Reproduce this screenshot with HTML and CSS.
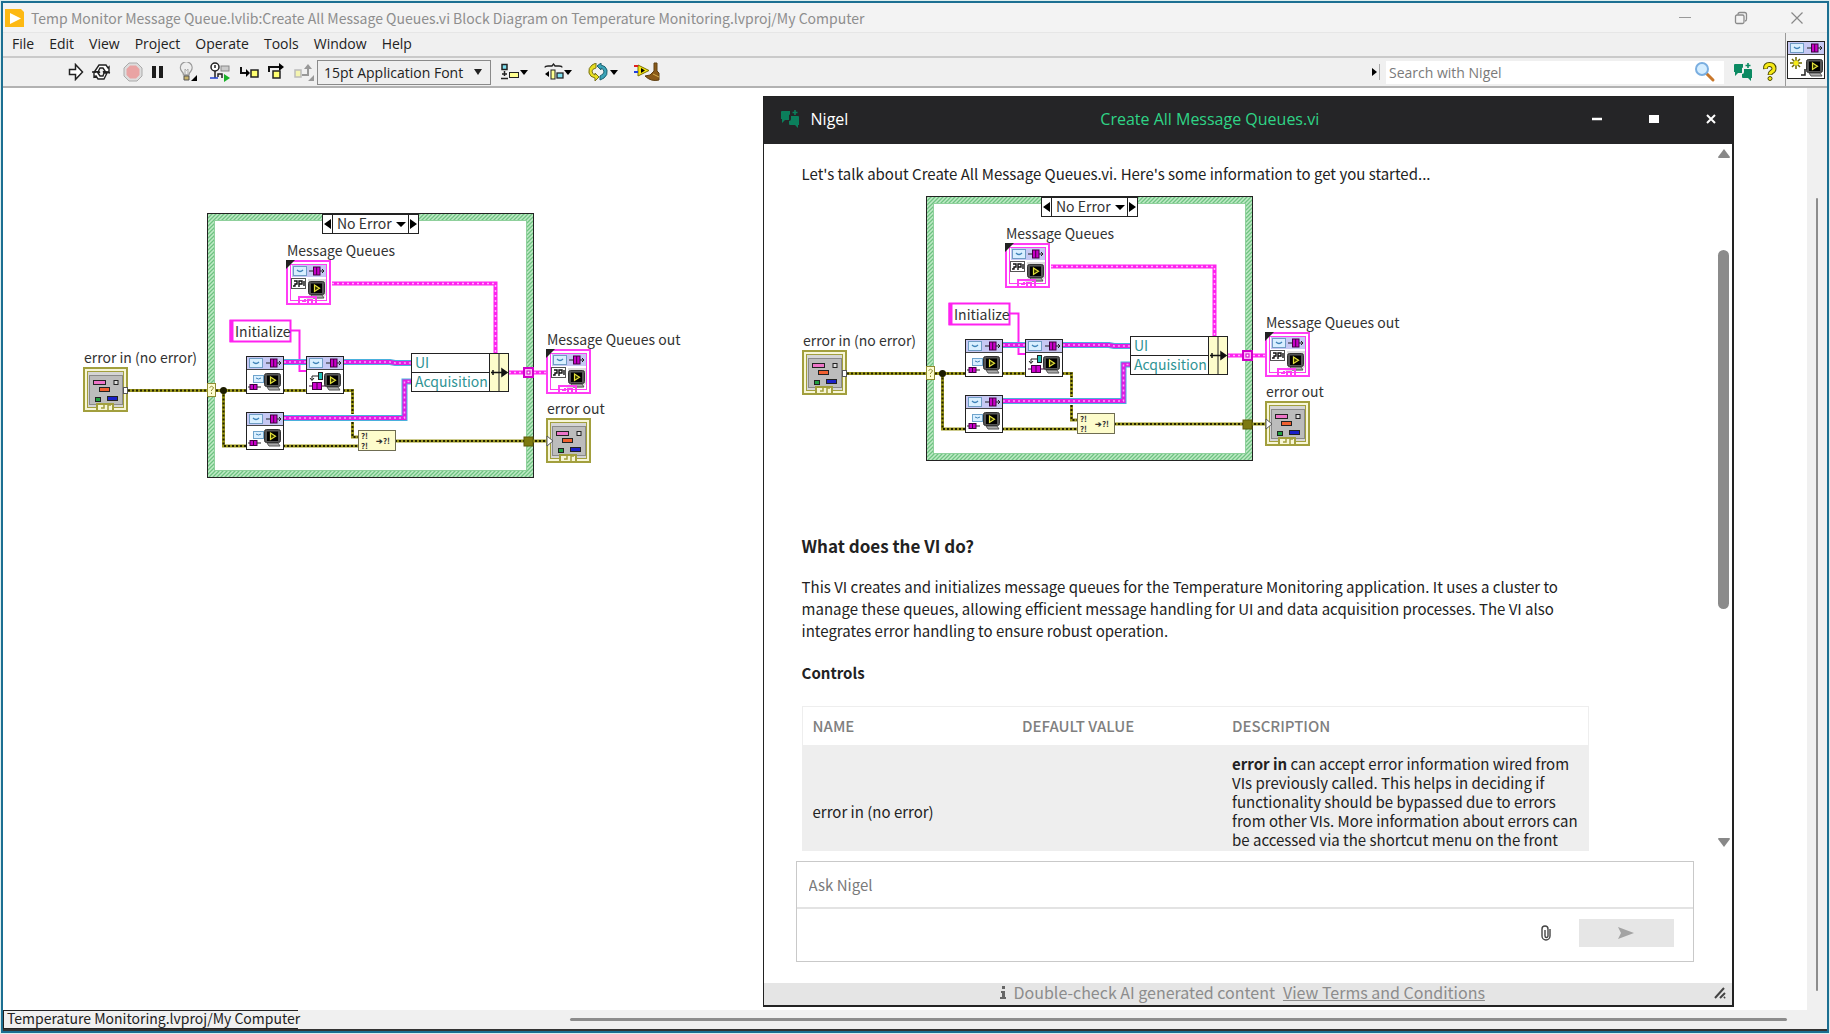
FILE: index.html
```html
<!DOCTYPE html>
<html lang="en">
<head>
<meta charset="utf-8">
<title>Create All Message Queues.vi Block Diagram</title>
<link rel="stylesheet" href="styles.css">
</head>
<body>
<svg class="defs" aria-hidden="true">
  <defs>
    <pattern id="hatch" width="4" height="4" patternUnits="userSpaceOnUse">
      <rect width="4" height="4" fill="#bfeac6"/>
      <path d="M-1 1L1 -1M0 4L4 0M3 5L5 3" stroke="#6fc482" stroke-width="1.3"/>
    </pattern>
    <g id="envelope">
      <rect x=".5" y=".5" width="13" height="9" fill="#d9efff" stroke="#6f9cc4"/>
      <path d="M4 4q3 3 6 0" fill="none" stroke="#3f83b8" stroke-width="1.3"/>
    </g>
    <g id="queue">
      <path d="M-2 5h15M11 3l2 2-2 2" stroke="#222" fill="none"/>
      <rect x="2.500" y="1" width="6.500" height="8" fill="#c800c8" stroke="#400040"/>
      <path d="M5.700 1v8" stroke="#400040"/>
    </g>
    <g id="monitor">
      <path d="M3 14h11l2 3H5z" fill="#aaa" stroke="#555"/>
      <rect x=".5" y=".5" width="16" height="13" rx="2" fill="#555" stroke="#333"/>
      <rect x="3" y="2.500" width="11" height="9.500" fill="#000"/>
      <path d="M6.500 4l5 3.200-5 3.200z" fill="#333300" stroke="#e3e13a" stroke-width="1.200"/>
    </g>
    <g id="vi-head">
      <rect x=".5" y=".5" width="37" height="37" fill="#fff" stroke="#222"/>
      <rect x="1" y="1" width="36" height="12" fill="#c6c8f3"/>
      <path d="M1 13.500h36" stroke="#444"/>
      <use href="#envelope" x="3" y="2"/>
      <use href="#queue" x="22" y="2"/>
    </g>
    <g id="sub-vi">
      <use href="#vi-head"/>
      <use href="#monitor" x="18" y="17"/>
      <rect x="7.500" y="19.500" width="10" height="7" fill="#d9efff" stroke="#6fa4cc"/>
      <path d="M10 22q2.500 2 5 0" stroke="#3f83b8" fill="none"/>
      <path d="M2 31h13" stroke="#222"/>
      <rect x="4" y="28.500" width="7" height="5" fill="#c800c8" stroke="#400040"/>
      <path d="M7.500 28v6" stroke="#400040"/>
    </g>
    <g id="cluster-icon">
      <rect x="1" y="1" width="43" height="43" fill="#fff" stroke="#ff3df4" stroke-width="2"/>
      <rect x="4.500" y="4.500" width="36" height="36" fill="#fff" stroke="#ff3df4"/>
      <rect x="6" y="5" width="34" height="12" fill="#c6c8f3"/>
      <use href="#envelope" x="7" y="6"/>
      <use href="#queue" x="25" y="6"/>
      <path d="M22 19h18v16l-4 4H20l3-4" fill="#ddd"/>
      <use href="#monitor" x="22" y="21"/>
      <rect x="5.500" y="18.500" width="14" height="10" fill="#fff" stroke="#555"/>
      <path d="M7 26h2v-2h2v-3H8M13 27v-6h3v3h-3M18 21v5" fill="none" stroke="#111" stroke-width="1.400"/>
      <path d="M13 44v-7h17v7M16 41h3v-2M22 43v-3h4v3" fill="none" stroke="#ff3df4" stroke-width="2"/>
      <path d="M0 0h9L0 9z" fill="#222"/>
    </g>
    <g id="error-icon">
      <rect x="1" y="1" width="43" height="43" fill="#f7f6d8" stroke="#a29f3d" stroke-width="2"/>
      <rect x="4.500" y="4.500" width="36" height="36" fill="#d5d5d5" stroke="#a29f3d"/>
      <rect x="6.500" y="8.500" width="33" height="29" fill="#bcbcbc" stroke="#8a8a8a"/>
      <rect x="10.500" y="13.500" width="12" height="4" fill="#ee74c8" stroke="#222"/>
      <rect x="31" y="13.500" width="4" height="4" fill="#ddd" stroke="#222"/>
      <rect x="16.500" y="20.500" width="10" height="4" fill="#f06030" stroke="#222"/>
      <rect x="12.500" y="30.500" width="5" height="4" fill="#20a040" stroke="#222"/>
      <rect x="24.500" y="29.500" width="10" height="4" fill="#1a20c8" stroke="#222"/>
      <path d="M14 43v-6h16v6" fill="#f7f6d8" stroke="#a29f3d" stroke-width="2"/>
      <path d="M18 41h3v-3M25 43v-5h3" fill="none" stroke="#a29f3d" stroke-width="1.500"/>
    </g>
    <g id="nigel">
      <path d="M0 2q0-1 1-1h8v3q0 1-1 1v5H4l-3 3V9H0z"/>
      <path d="M9 6h8q1 0 1 1v8h-1v3l-3-3H9q-1 0-1-1v-3q2 0 2-2V6z"/>
      <path d="M13.200 0h1.600v1.700h1.700v1.600h-1.700V5h-1.600V3.300h-1.700V1.700h1.700z"/>
    </g>
    <g id="diagram-art">
      <rect x="137" y="13" width="327" height="265" fill="url(#hatch)"/>
      <rect x="144.500" y="20.500" width="312" height="250" fill="#fff" stroke="#8fd09c"/>
      <rect x="137.500" y="13.500" width="326" height="264" fill="none" stroke="#222"/>
      <g fill="none" stroke="#ff22f0" stroke-width="4">
        <path d="M262 83.500H425.500V153M439 172.500h37"/>
        <path d="M221 130.500h8.500v40.500h7" stroke-width="2"/>
      </g>
      <path d="M262 83.500H425.500V153M439 172.500h37" fill="none" stroke="#ffb6fa" stroke-width="1.500" stroke-dasharray="2 3"/>
      <path d="M214 162h22M274 162h46l5 1h17M214 218H334.500V181.500H342" fill="none" stroke="#4ab0dd" stroke-width="6"/>
      <path d="M214 162h22M274 162h46l5 1h17M214 218H334.500V181.500H342" fill="none" stroke="#e21be4" stroke-width="4"/>
      <path d="M214 162h22M274 162h46l5 1h17M214 218H334.500V181.500H342" fill="none" stroke="#f9a5fb" stroke-width="1.500" stroke-dasharray="2 3"/>
      <path d="M58 190.500H176M153.500 190.500V246H176M213 190.500h23M273 190.500h9.500V214M282.500 222v15h6M213 246h75M325 241h151" fill="none" stroke="#9c981d" stroke-width="3"/>
      <path d="M58 190.500H176M153.500 190.500V246H176M213 190.500h23M273 190.500h9.500V214M282.500 222v15h6M213 246h75M325 241h151" fill="none" stroke="#222200" stroke-width="2" stroke-dasharray="2 2"/>
      <circle cx="153.500" cy="190.500" r="3.500" fill="#1c1c00"/>
      <rect x="137.500" y="183.500" width="8" height="13" fill="#fdfcd0" stroke="#8f8b30"/>
      <path d="M139.500 187.500q2-2.500 4 0 0 1.500-2 2.500v1M141.500 192.500v1.500" fill="none" stroke="#8f8b30"/>
      <rect x="454" y="168" width="9" height="9" fill="#ffb6fa" stroke="#d000c8" stroke-width="2"/>
      <rect x="457" y="171" width="3" height="3" fill="#fff" stroke="#d000c8"/>
      <rect x="454" y="237" width="9" height="9" fill="#7d7a10" stroke="#5e5b08"/>
      <rect x="252.500" y="14.500" width="96" height="19" fill="#fff" stroke="#222"/>
      <path d="M262.500 14v19M338.500 14v19" stroke="#222"/>
      <path d="M261 19v10l-7-5zM340 19v10l7-5zM326 22h10l-5 5z" fill="#000"/>
      <use href="#cluster-icon" x="216" y="60"/>
      <rect x="160.500" y="120.500" width="60" height="21" fill="#fff" stroke="#ff22f0" stroke-width="2"/>
      <path d="M161.500 120v22" stroke="#ff22f0" stroke-width="4"/>
      <use href="#sub-vi" x="176" y="156"/>
      <g transform="translate(236 156)">
        <use href="#vi-head"/>
        <use href="#monitor" x="18" y="17"/>
        <rect x="12.500" y="16.500" width="4" height="7" fill="#20c0b8" stroke="#222"/>
        <path d="M12 20H6v4M4 22l2 2.500 2-2.500" fill="none" stroke="#222"/>
        <rect x="6.500" y="26.500" width="9" height="7" fill="#d000d0" stroke="#400040"/>
        <path d="M11 26v8M3 30h3M16 30h3" stroke="#400040"/>
      </g>
      <use href="#sub-vi" x="176" y="212"/>
      <rect x="288.500" y="230.500" width="37" height="20" fill="#fdfccb" stroke="#6f6d52"/>
      <rect x="341.500" y="153.500" width="97" height="38" fill="#fff" stroke="#222"/>
      <path d="M420 154h18v37h-18z" fill="#fdfccb"/>
      <path d="M342 172.500h77M419.500 153v38M429 153v38" stroke="#222"/>
      <path d="M421 172.500h14M432 169l5 3.500-5 3.500zM423 170v5" stroke="#111" stroke-width="1.500" fill="#111"/>
      <use href="#cluster-icon" x="476" y="149"/>
      <use href="#error-icon" x="476" y="218"/>
      <path d="M477 236l6 5-6 5z" fill="#fff" stroke="#555"/>
      <use href="#error-icon" x="13" y="167"/>
      <rect x="53.500" y="187.500" width="4" height="6" fill="#fff" stroke="#555"/>
    </g>
  </defs>
</svg>

<div class="app">
  <header class="titlebar">
    <svg class="app-icon" width="20" height="20" viewBox="0 0 20 20"><path d="M0 1h16l3 3v15H0z" fill="#fdb913"/><path d="M5 5l11 5.500L5 16z" fill="#fff"/></svg>
    <h1 class="app-title">Temp Monitor Message Queue.lvlib:Create All Message Queues.vi Block Diagram on Temperature Monitoring.lvproj/My Computer</h1>
    <div class="window-controls">
      <button aria-label="Minimize"><svg width="14" height="14"><path d="M1 6.500h12" stroke="#999"/></svg></button>
      <button aria-label="Restore"><svg width="14" height="14" fill="none" stroke="#8a8a8a" stroke-width="1.300"><rect x="1.500" y="4" width="8.500" height="8.500" rx="1.500"/><path d="M4 3.500Q4 1.500 6 1.500h4.500q2 0 2 2V8q0 2-1.500 2"/></svg></button>
      <button aria-label="Close"><svg width="14" height="14"><path d="M1.500 1.500l11 11M12.500 1.500l-11 11" stroke="#888" stroke-width="1.200"/></svg></button>
    </div>
  </header>

  <div class="commands">
    <div class="bars">
      <nav class="menubar">
        <button>File</button><button>Edit</button><button>View</button><button>Project</button><button>Operate</button><button>Tools</button><button>Window</button><button>Help</button>
      </nav>
      <div class="toolbar">
        <div class="run-tools">
          <button aria-label="Run"><svg width="16" height="18"><path d="M1.500 6.500h6v-5l7 7.500-7 7.500v-5h-6z" fill="#fff" stroke="#222" stroke-width="1.500"/></svg></button>
          <button aria-label="Run continuously"><svg width="20" height="18" fill="#fff" stroke="#222" stroke-width="1.400"><path d="M4 8l4-6h7l2 3 1-1v5h-6l2-1-2-3H9L7 9zM16 10l-3 6H7l-2-3-2 1V9h6l-2 1 2 3h3l1-3z"/><path d="M1 9h4M15 9l4 1"/></svg></button>
          <button class="gap-l" aria-label="Abort"><svg width="20" height="20"><path d="M6 1h8l5 5v8l-5 5H6l-5-5V6z" fill="#ddd" stroke="#aaa"/><path d="M7 3.500h6L16.500 7v6L13 16.500H7L3.500 13V7z" fill="#e9a3a3"/></svg></button>
          <button aria-label="Pause"><svg width="16" height="18"><path d="M2 3h4v12H2zM9 3h4v12H9z" fill="#1c1c1c"/></svg></button>
          <button class="gap-l" aria-label="Highlight execution"><svg width="20" height="20"><path d="M5.500 13q0-2-2-4A5.800 5.800 0 1 1 13 9q-2 2-2 4z" fill="#eee" stroke="#9a9a9a" stroke-width="1.300"/><path d="M7 13V7l1.500 1.500L10 7v6" stroke="#aaa" fill="none"/><path d="M6 14h5v4H6z" fill="#c9b46c" stroke="#555"/><path d="M19 13v6h-6z" fill="#000"/></svg></button>
          <button class="gap-l" aria-label="Retain wire values"><svg width="20" height="20"><circle cx="5" cy="5" r="4" fill="#fff" stroke="#222" stroke-width="1.500"/><path d="M5 3v3M5 9v7M8 15v-3h4v4" stroke="#222" stroke-width="1.500" fill="none"/><rect x="11" y="4" width="8" height="5" fill="#ccc" stroke="#888"/><path d="M0 16h8" stroke="#2040d0" stroke-width="1.500"/><path d="M14 12l6 4-6 4z" fill="#18b028"/></svg></button>
          <button class="gap-m" aria-label="Step into"><svg width="20" height="18"><path d="M2 4v6h5" fill="none" stroke="#111" stroke-width="2"/><path d="M7 6l4 4-4 4z"/><rect x="12" y="7" width="7" height="7" fill="#ffff70" stroke="#222" stroke-width="1.500"/></svg></button>
          <button aria-label="Step over"><svg width="20" height="18"><path d="M3 9V4h11" fill="none" stroke="#111" stroke-width="2"/><path d="M13 0l5 4-5 4z"/><rect x="7" y="8" width="7" height="7" fill="#ffff70" stroke="#222" stroke-width="1.500"/></svg></button>
          <button aria-label="Step out"><svg width="22" height="20"><rect x="2" y="8" width="6" height="7" fill="#f4f4b0" stroke="#bbb" stroke-width="1.500"/><path d="M9 13h6V7" fill="none" stroke="#999" stroke-width="2"/><path d="M11 7l4-5 4 5zM21 13v6h-6z" fill="#999"/></svg></button>
        </div>
        <label class="font-picker"><select aria-label="Font"><option>15pt Application Font</option></select><svg width="8" height="6"><path d="M0 0h8L4 6z" fill="#222"/></svg></label>
        <div class="arrange-tools">
          <button aria-label="Align objects"><svg width="28" height="18"><rect x="2" y="1.500" width="5" height="5" fill="#7fe0f0" stroke="#222" stroke-width="1.500"/><path d="M1 15.500h7M4.500 8v5M2 11h5" stroke="#222" stroke-width="1.500"/><rect x="9.500" y="9.500" width="9" height="5" fill="#ffff90" stroke="#222"/><path d="M20 7h8l-4 5z"/></svg></button>
          <button aria-label="Distribute objects"><svg width="28" height="18"><path d="M1 4.500Q1 3 4 3h4l1.500-2L11 3h4q3 0 3 1.500" fill="none" stroke="#222" stroke-width="1.300"/><path d="M1 11l4-3v6z"/><rect x="7" y="7" width="4" height="9" fill="#ffff90" stroke="#222"/><rect x="13" y="10" width="6" height="5" fill="#7fe0f0" stroke="#222" stroke-width="1.300"/><path d="M20 7h8l-4 5z"/></svg></button>
          <button aria-label="Reorder"><svg width="30" height="18"><path d="M8 0L4 2Q0 5 1 10q1 4 6 5v3l4-4-4-4v2Q4 11 4 8q0-2 4-3z" fill="#e8df20" stroke="#77711a"/><path d="M12 17l4-2q4-3 3-8-1-4-6-5V0L9 3l4 4V5q3 1 3 4 0 2-4 4z" fill="#3ba4b8" stroke="#1c6272"/><path d="M22 7h8l-4 5z"/></svg></button>
          <button aria-label="Clean up diagram"><svg width="28" height="20"><path d="M4 3v11l11-5.500z" fill="#f5e510" stroke="#7a7000"/><path d="M0 4h4" stroke="#e02020" stroke-width="2"/><path d="M0 10h4" stroke="#2040e0" stroke-width="2"/><path d="M7 6l4 2.500L7 11z"/><path d="M20 1h3v8l2 2v7q-8 2-14-4l5-1 4-4z" fill="#8a5a18" stroke="#5e4012"/><path d="M19 12l6 3" stroke="#d6b04c"/></svg></button>
        </div>
        <form class="search">
          <svg width="8" height="16"><path d="M0 4l5 4-5 4z"/><path d="M7.500 0v16" stroke="#aaa"/></svg>
          <label class="search-box"><input type="text" placeholder="Search with Nigel" aria-label="Search with Nigel"><svg width="22" height="22"><path d="M12 12l7 7" stroke="#c9772a" stroke-width="3" stroke-linecap="round"/><circle cx="8" cy="8" r="6" fill="#d4edff" stroke="#7aaee0" stroke-width="2"/></svg></label>
          <button type="button" aria-label="Nigel"><svg width="18" height="18" fill="#0b8a62"><use href="#nigel"/></svg></button>
          <button type="button" aria-label="Help"><svg width="16" height="20"><path d="M3.500 7Q3 2.500 7.500 2.500T12 6.500Q12 9 9.500 10 8 11 8 13" fill="none" stroke="#4d4a00" stroke-width="5"/><path d="M3.500 6.500Q3.500 2.500 7.500 2.500T12 6.500Q12 9 9.500 10 8 11 8 12.500" fill="none" stroke="#f6ea16" stroke-width="3"/><circle cx="8" cy="16.500" r="2" fill="#f6ea16" stroke="#4d4a00"/></svg></button>
        </form>
      </div>
    </div>
    <div class="vi-icon">
      <svg width="38" height="38"><use href="#vi-head"/><path d="M9 16v12M3 22h12M5 18l8 8M13 18l-8 8" stroke="#6b6500" stroke-width="1.500"/><circle cx="9" cy="22" r="2.500" fill="#f6ea16"/><use href="#monitor" x="19" y="18"/><path d="M14 34h4v-6" stroke="#222" fill="none" stroke-width="1.500"/></svg>
    </div>
  </div>

  <main class="workspace">
    <section class="canvas">
      <svg class="diagram" width="600" height="270" viewBox="13 10 600 270">
        <use href="#diagram-art"/>
        <g class="labels">
          <text x="267" y="29">No Error</text><text x="217" y="56">Message Queues</text><text x="165" y="137">Initialize</text>
          <text x="14" y="163">error in (no error)</text><text class="teal" x="345" y="168">UI</text><text class="teal" x="345" y="187">Acquisition</text>
          <text x="477" y="145">Message Queues out</text><text x="477" y="214">error out</text>
          <text class="tiny" x="291" y="239">?!</text><text class="tiny" x="291" y="249">?!</text><text class="tiny" x="306" y="244">➔?!</text>
        </g>
      </svg>
    </section>

    <section class="chat">
      <header class="chat-head">
        <div class="brand"><svg width="18" height="18" fill="#0b7f5c"><use href="#nigel"/></svg>Nigel</div>
        <h2>Create All Message Queues.vi</h2>
        <div class="chat-controls">
          <button aria-label="Minimize"><svg width="12" height="12"><path d="M1 6h10" stroke="#fff" stroke-width="2.500"/></svg></button>
          <button aria-label="Maximize"><svg width="12" height="12"><path d="M1 2h10v8H1z" fill="#fff"/></svg></button>
          <button aria-label="Close"><svg width="12" height="12"><path d="M2 2l8 8M10 2l-8 8" stroke="#fff" stroke-width="2"/></svg></button>
        </div>
      </header>
      <div class="chat-body">
        <article class="answer">
          <p class="intro">Let's talk about Create All Message Queues.vi. Here's some information to get you started...</p>
          <svg class="diagram" width="600" height="270" viewBox="13 10 600 270">
            <use href="#diagram-art"/>
            <g class="labels">
              <text x="267" y="29">No Error</text><text x="217" y="56">Message Queues</text><text x="165" y="137">Initialize</text>
              <text x="14" y="163">error in (no error)</text><text class="teal" x="345" y="168">UI</text><text class="teal" x="345" y="187">Acquisition</text>
              <text x="477" y="145">Message Queues out</text><text x="477" y="214">error out</text>
              <text class="tiny" x="291" y="239">?!</text><text class="tiny" x="291" y="249">?!</text><text class="tiny" x="306" y="244">➔?!</text>
            </g>
          </svg>
          <h3>What does the VI do?</h3>
          <p class="summary">This VI creates and initializes message queues for the Temperature Monitoring application. It uses a cluster to manage these queues, allowing efficient message handling for UI and data acquisition processes. The VI also integrates error handling to ensure robust operation.</p>
          <h4>Controls</h4>
          <table>
            <thead><tr><th class="narrow">Name</th><th class="narrow">Default Value</th><th>Description</th></tr></thead>
            <tbody><tr><td>error in (no error)</td><td></td><td class="desc"><strong>error in</strong> can accept error information wired from VIs previously called. This helps in deciding if functionality should be bypassed due to errors from other VIs. More information about errors can be accessed via the shortcut menu on the front</td></tr></tbody>
          </table>
        </article>
        <div class="chat-scroll">
          <svg width="12" height="10"><path d="M6 0l6 8q0 1-1 1H1q-1 0-1-1z" fill="#888"/></svg>
          <div class="chat-track"><div class="chat-thumb"></div></div>
          <svg width="12" height="10"><path d="M6 10l6-8q0-1-1-1H1q-1 0-1 1z" fill="#888"/></svg>
        </div>
      </div>
      <form class="composer">
        <input type="text" placeholder="Ask Nigel" aria-label="Ask Nigel">
        <div class="composer-actions">
          <button type="button" class="attach" aria-label="Attach"><svg width="10" height="16" fill="none" stroke="#444" stroke-width="1.400"><path d="M9 4v7a4 4 0 0 1-8 0V4a3 3 0 0 1 6 0v7a1.500 1.500 0 0 1-3 0V5"/></svg></button>
          <button type="button" class="send" aria-label="Send"><svg width="16" height="12"><path d="M0 0l16 6-16 6 3-6z" fill="#a3a3a3"/></svg></button>
        </div>
      </form>
      <footer class="chat-foot">
        <svg width="6" height="13"><path d="M2 0h3v3H2zM1 5h4v6h1v2H0v-2h2V7H1z" fill="#666"/></svg>
        <span>Double-check AI generated content</span>
        <a href="#terms">View Terms and Conditions</a>
        <svg class="grip" width="12" height="12"><path d="M1 11L10 1M6 11l5-5M10 11l1-1" stroke="#444" stroke-width="2"/></svg>
      </footer>
    </section>
    <div class="v-scroll"><div class="v-thumb"></div></div>
  </main>

  <footer class="statusbar">
    <div class="context">Temperature Monitoring.lvproj/My Computer</div>
    <div class="h-track"><div class="h-thumb"></div></div>
  </footer>
</div>
</body>
</html>
```
FILE: styles.css
```css
* { box-sizing: border-box; }

body {
  margin: 0;
  background: #dceeee;
  font-family: "Open Sans", "Noto Sans", sans-serif;
  font-size: 14px;
  color: #222;
}

button {
  display: flex;
  align-items: center;
  justify-content: center;
  padding: 0;
  border: 0;
  background: none;
  font: inherit;
  color: inherit;
}

input, select { font: inherit; border: 0; outline: 0; }
h1, h2, h3, h4, p { margin: 0; font-weight: 400; }
svg { flex: none; display: block; }
.defs { position: absolute; width: 0; height: 0; }

.app {
  display: flex;
  flex-direction: column;
  height: calc(100vh - 2px);
  margin: 1px;
  border: 2px solid #1c6f92;
  background: #fff;
}

/* Title bar */
.titlebar {
  display: flex;
  align-items: center;
  gap: 6px;
  height: 30px;
  padding: 0 16px 0 2px;
  background: #f3f3f3;
  border-bottom: 1px solid #e6e6e6;
}
.app-title { flex: 1; font-family: "Noto Sans CJK SC", sans-serif; font-size: 14px; color: #8e8e8e; white-space: nowrap; }
.window-controls { display: flex; gap: 42px; padding-right: 7px; }

/* Menu and tool bars */
.commands { display: flex; background: #f0f0f0; border-bottom: 2px solid #b2b2b2; }
.bars { flex: 1; }
.menubar { display: flex; gap: 15px; height: 25px; padding: 0 0 3px 9px; border-bottom: 2px solid #cacaca; }
.toolbar { display: flex; align-items: center; height: 28px; padding-right: 7px; }
.run-tools { display: flex; align-items: center; gap: 7px; width: 314px; padding-left: 65px; }
.gap-l { margin-left: 5px; }
.gap-m { margin-left: 2px; }
.font-picker {
  display: flex;
  align-items: center;
  width: 174px;
  height: 25px;
  padding: 0 8px 0 6px;
  border: 1px solid #8a8a8a;
  background: #efefef;
}
.font-picker select { flex: 1; appearance: none; background: none; color: #222; }
.arrange-tools { display: flex; align-items: center; gap: 16px; padding-left: 9px; }
.search { display: flex; align-items: center; gap: 6px; margin-left: auto; }
.search button { margin-left: 4px; }
.search-box { display: flex; align-items: center; width: 338px; height: 23px; padding: 0 8px 0 3px; background: #fff; }
.search-box input { flex: 1; min-width: 0; padding: 0; background: none; }
input::placeholder { color: #7a7a7a; opacity: 1; }
.vi-icon { display: flex; align-items: center; padding: 0 2px 0 1px; border-left: 1px solid #9a9a9a; }

/* Workspace */
.workspace { display: grid; grid-template-columns: 760fr 972fr 73px 20px; flex: 1; min-height: 0; }
.canvas { padding: 122px 0 0 80px; overflow: hidden; }
.v-scroll { grid-column: 4; padding: 110px 9px 19px; background: #f0f0f0; }
.v-thumb { height: 100%; border-radius: 2px; background: #8c8c8c; }

.labels text { font-family: "Noto Sans CJK SC", sans-serif; font-size: 14px; fill: #333; }
.labels .teal { fill: #2f9494; }
.labels .tiny { font-size: 8px; fill: #333; font-weight: 700; }

/* Chat window */
.chat {
  display: flex;
  flex-direction: column;
  min-height: 0;
  margin: 8px 0 3px;
  border: 1px solid #222;
  border-width: 1px 2px 2px 1px;
  background: #fff;
  font-family: "Noto Sans CJK SC", "Open Sans", sans-serif;
  font-size: 15px;
}
.chat-head {
  display: grid;
  grid-template-columns: 1fr auto 1fr;
  align-items: center;
  height: 47px;
  padding: 0 15px 3px 17px;
  background: #252527;
  color: #fff;
  font-family: "Open Sans", sans-serif;
  font-size: 16px;
}
.brand { display: flex; align-items: center; gap: 12px; }
.chat-head h2 { margin-right: 78px; font-size: 16px; color: #2fd486; }
.chat-controls { display: flex; justify-content: flex-end; gap: 45px; }

.chat-body { display: flex; flex: 1; min-height: 0; }
.answer { flex: 1; min-width: 0; overflow: hidden; padding: 19px 0 0 38px; }
.intro { line-height: 22px; }
.answer .diagram { margin-top: 8px; }
.answer h3 { margin-top: 70px; font-size: 17px; line-height: 26px; font-weight: 700; }
.summary { margin-top: 17px; padding-right: 140px; line-height: 22px; }
.answer h4 { margin-top: 20px; line-height: 22px; font-weight: 700; }
table { width: calc(100% - 129px); margin-top: 22px; border-collapse: collapse; table-layout: fixed; border: 1px solid #eee; }
th, td { padding: 0 10px; text-align: left; }
th { height: 38px; color: #808080; font-weight: 500; text-transform: uppercase; }
th.narrow { width: 210px; }
td { height: 134px; background: #eee; line-height: 19px; }
td.desc { padding-top: 9px; vertical-align: top; }
.chat-scroll { display: flex; flex-direction: column; width: 14px; padding: 5px 0 4px; }
.chat-track { flex: 1; padding: 91px 0 228px; }
.chat-thumb { width: 11px; height: 100%; border-radius: 6px; background: #8b8b8b; }

.composer { margin: 10px 38px 21px 32px; border: 1px solid #c9c9c9; }
.composer input { display: block; width: 100%; height: 47px; padding: 0 12px; border-bottom: 2px solid #e3e3e3; background: none; }
.composer-actions { display: flex; align-items: center; justify-content: flex-end; gap: 28px; height: 52px; padding: 0 19px 4px 0; }
.send { width: 95px; height: 28px; background: #e6e6e6; }

.chat-foot {
  display: flex;
  align-items: center;
  gap: 8px;
  height: 22px;
  padding: 0 6px 3px 236px;
  background: #e5e5e5;
  color: #8c8c8c;
  font-size: 16px;
  line-height: 19px;
}
.chat-foot a { color: inherit; }
.grip { margin-left: auto; }

/* Status bar */
.statusbar { display: flex; height: 21px; background: #f0f0f0; border-bottom: 2px solid #333; }
.context { width: 295px; padding-left: 3px; border: 1px solid #222; border-right: 0; font-family: "Noto Sans CJK SC", sans-serif; font-size: 14px; line-height: 14px; white-space: nowrap; }
.h-track { flex: 1; padding: 8px 40px 0 272px; }
.h-thumb { height: 3px; border-radius: 2px; background: #8c8c8c; }
```
